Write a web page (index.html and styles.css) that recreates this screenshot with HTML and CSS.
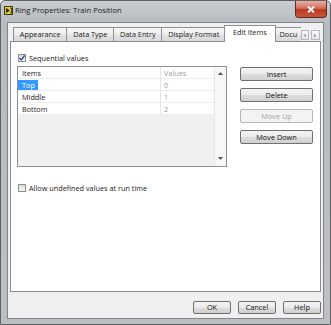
FILE: index.html
```html
<!DOCTYPE html>
<html>
<head>
<meta charset="utf-8">
<link rel="stylesheet" href="styles.css">
</head>
<body>
<div class="window">
  <div class="titlebar">
    <svg class="appicon" width="9" height="9" viewBox="0 0 9 9">
      <rect x="0.5" y="0.5" width="8" height="8" fill="#e3cf3a" stroke="#3a3a1a"/>
      <path d="M2 2 L6 4.5 L2 7 Z" fill="#2a2a10"/>
      <path d="M6 2 L7.5 2 L7.5 7 L6 7" fill="none" stroke="#2a2a10" stroke-width="0.8"/>
    </svg>
    <span class="title">Ring Properties: Train Position</span>
    <div class="close">
      <svg width="8" height="7" viewBox="0 0 8 7"><path d="M1 0.5 L7 6.5 M7 0.5 L1 6.5" stroke="#fff" stroke-width="1.8"/></svg>
    </div>
  </div>
  <div class="client">
    <div class="tabs">
      <div class="tab">Appearance</div>
      <div class="tab">Data Type</div>
      <div class="tab">Data Entry</div>
      <div class="tab">Display Format</div>
      <div class="tab active">Edit Items</div>
      <div class="tab clipped">Docu</div>
      <div class="tabarrow"><svg width="4" height="5" viewBox="0 0 4 5"><path d="M3 0.5 L0.8 2.5 L3 4.5 Z" fill="#9a9a9a"/></svg></div>
      <div class="tabarrow"><svg width="4" height="5" viewBox="0 0 4 5"><path d="M1 0.5 L3.2 2.5 L1 4.5 Z" fill="#9a9a9a"/></svg></div>
    </div>
    <div class="panel">
      <div class="leftcol">
        <div class="check seq">
          <span class="box"><svg width="8" height="8" viewBox="0 0 8 8"><path d="M1.5 4 L3.3 6 L6.6 1.5" fill="none" stroke="#2a4a9a" stroke-width="1.3"/></svg></span>
          <span>Sequential values</span>
        </div>
        <div class="listbox">
          <div class="lb-main">
            <div class="row head"><span class="c1"><span class="item">Items</span></span><span class="c2">Values</span></div>
            <div class="row"><span class="c1"><span class="item sel">Top</span></span><span class="c2">0</span></div>
            <div class="row"><span class="c1"><span class="item">Middle</span></span><span class="c2">1</span></div>
            <div class="row"><span class="c1"><span class="item">Bottom</span></span><span class="c2">2</span></div>
          </div>
          <div class="vscroll">
            <svg width="5" height="3" viewBox="0 0 5 3"><path d="M0 3 L2.5 0 L5 3 Z" fill="#555"/></svg>
            <svg width="5" height="3" viewBox="0 0 5 3"><path d="M0 0 L2.5 3 L5 0 Z" fill="#555"/></svg>
          </div>
        </div>
        <div class="check allow">
          <span class="box"></span>
          <span>Allow undefined values at run time</span>
        </div>
      </div>
      <div class="btncol">
        <button class="btn">Insert</button>
        <button class="btn">Delete</button>
        <button class="btn" disabled>Move Up</button>
        <button class="btn">Move Down</button>
      </div>
    </div>
    <div class="footer">
      <button class="btn small">OK</button>
      <button class="btn small">Cancel</button>
      <button class="btn small">Help</button>
    </div>
  </div>
</div>
</body>
</html>
```
FILE: styles.css
```css
* { box-sizing: border-box; }
html, body {
  margin: 0;
  padding: 0;
}
body {
  width: 331px;
  height: 325px;
  overflow: hidden;
  background: #fff;
  font-family: "Open Sans", "Noto Sans", sans-serif;
  font-size: 7.3px;
  color: #1b1b1b;
}
.window {
  width: 331px;
  height: 325px;
  border: 1px solid #5d6166;
  border-radius: 5px 5px 0 0;
  background: linear-gradient(#c9cdd1, #b7bcc1 22px, #bcc0c4);
  padding: 0 6px 5px 6px;
  display: flex;
  flex-direction: column;
}
.titlebar {
  height: 21px;
  margin: 0 -6px;
  padding: 0 3px 0 3px;
  display: flex;
  align-items: flex-start;
}
.appicon {
  margin-top: 5px;
  flex: none;
}
.title {
  margin-left: 2px;
  margin-top: 4px;
  font-size: 7.6px;
  line-height: 11px;
  color: #202020;
}
.close {
  margin-left: auto;
  width: 32px;
  height: 17px;
  border: 1px solid #5e2a22;
  border-top: none;
  border-radius: 0 0 4px 4px;
  background: linear-gradient(#eab0a4, #d0705c 45%, #b7381f 55%, #c9573c);
  display: flex;
  align-items: center;
  justify-content: center;
}
.client {
  flex: 1;
  border: 1px solid #80858a;
  background: #f0f0f0;
  padding: 0 1px 0 1px;
  display: flex;
  flex-direction: column;
}
.tabs {
  height: 18px;
  padding-left: 4px;
  display: flex;
  align-items: flex-end;
  position: relative;
  z-index: 1;
}
.tab {
  height: 14px;
  padding: 0 5.8px;
  margin-left: -1px;
  border: 1px solid #8c8f96;
  border-bottom: none;
  background: linear-gradient(#f6f6f6, #ececec 50%, #e2e2e2 51%, #d9d9d9);
  line-height: 12px;
  white-space: nowrap;
  text-align: center;
}
.tab:first-child { margin-left: 0; }
.tab.active {
  height: 17px;
  margin: 0 -2px -1px -2px;
  padding: 0 7.8px 2px;
  background: #fff;
  line-height: 13px;
  position: relative;
}
.tab.clipped {
  width: 28px;
  padding: 0 0 0 6px;
  overflow: hidden;
  text-align: left;
  border-right: none;
}
.tabarrow {
  width: 8px;
  height: 10px;
  margin-bottom: 1px;
  margin-right: 2px;
  border: 1px solid #b5b8bd;
  background: linear-gradient(#fafafa, #e6e6e6);
  display: flex;
  align-items: center;
  justify-content: center;
}
.tabarrow:last-child { width: 9px; }
.panel {
  height: 251px;
  margin: 0 1px;
  border: 1px solid #898c95;
  background: #fff;
  padding: 11px 7px 0 6px;
  display: flex;
  gap: 13px;
}
.leftcol {
  width: 210px;
  display: flex;
  flex-direction: column;
}
.check {
  height: 9px;
  display: flex;
  align-items: center;
  gap: 3px;
  margin-left: 1px;
  white-space: nowrap;
}
.box {
  width: 8px;
  height: 8px;
  border: 1px solid #8e8f8f;
  background: linear-gradient(#dcdcdc, #f7f7f7);
  display: flex;
  align-items: center;
  justify-content: center;
  flex: none;
}
.box svg { margin: -1px; }
.listbox {
  margin-top: 4px;
  height: 101px;
  border: 1px solid #8b9097;
  background: #f0f0f0;
  display: flex;
}
.lb-main {
  flex: 1;
  display: flex;
  flex-direction: column;
}
.row {
  height: 12px;
  background: #fff;
  border-bottom: 1px solid #ececec;
  display: flex;
  align-items: center;
}
.c1 {
  width: 143px;
  height: 100%;
  border-right: 1px solid #e4e4e4;
  display: flex;
  align-items: center;
}
.c2 {
  padding-left: 3px;
  color: #9c9c9c;
}
.item {
  display: inline-block;
  height: 10px;
  line-height: 10px;
  padding: 0 3px 0 4px;
}
.item.sel {
  background: #3399ff;
  color: #fff;
}
.vscroll {
  width: 12px;
  background: #f7f7f7;
  border-left: 1px solid #e6e6e6;
  display: flex;
  flex-direction: column;
  align-items: center;
  justify-content: space-between;
  padding: 5px 0 6px;
}
.allow {
  margin-top: 16px;
}
.btncol {
  margin-top: 14px;
  width: 73px;
  display: flex;
  flex-direction: column;
  gap: 7px;
}
.btn {
  height: 14px;
  width: 73px;
  padding: 0;
  border: 1px solid #707070;
  border-radius: 2px;
  background: linear-gradient(#f3f3f3, #ebebeb 50%, #dddddd 51%, #d0d0d0);
  font-family: inherit;
  font-size: 7.3px;
  color: #111;
  line-height: 12px;
}
.btn:disabled {
  border-color: #b3b6b9;
  background: #f3f3f3;
  color: #a3a3a3;
}
.footer {
  margin-top: 9px;
  padding-right: 1px;
  display: flex;
  justify-content: flex-end;
  gap: 7px;
}
.btn.small {
  width: 38px;
  height: 13px;
  line-height: 11px;
}
```
